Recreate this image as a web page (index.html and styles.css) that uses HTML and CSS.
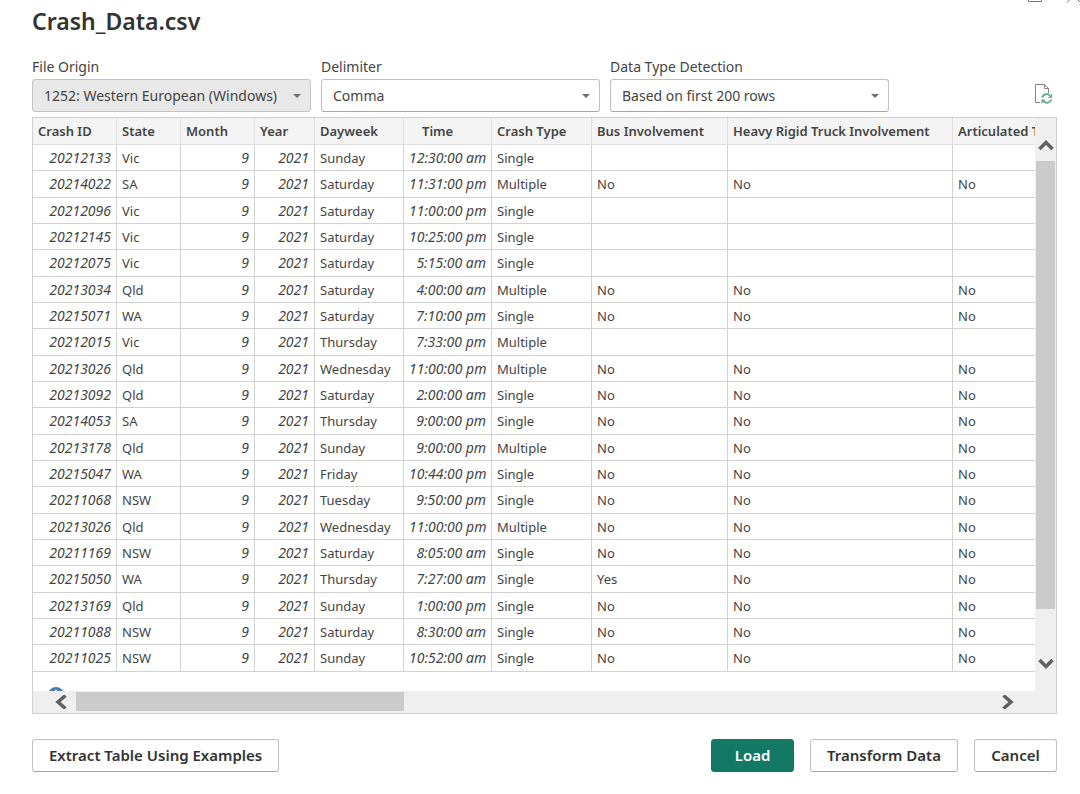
FILE: index.html
```html
<!DOCTYPE html>
<html lang="en">
<head>
<meta charset="utf-8">
<title>Crash_Data.csv</title>
<link rel="stylesheet" href="styles.css">
</head>
<body>
<div class="window-controls" aria-hidden="true">
  <svg width="60" height="4" viewBox="0 0 60 4"><path d="M8.500 0V1.500H21.500V0M47 2.500L50 -0.500M60.500 2.500L57.500 -0.500" fill="none" stroke="#777"/></svg>
</div>
<main class="dialog">
  <h1 class="title">Crash_Data.csv</h1>

  <form class="options">
    <div class="field">
      <label for="origin">File Origin</label>
      <div class="picker picker-disabled">
        <select id="origin" disabled><option>1252: Western European (Windows)</option></select>
      </div>
    </div>
    <div class="field">
      <label for="delimiter">Delimiter</label>
      <div class="picker">
        <select id="delimiter"><option>Comma</option></select>
      </div>
    </div>
    <div class="field">
      <label for="detection">Data Type Detection</label>
      <div class="picker">
        <select id="detection"><option>Based on first 200 rows</option></select>
      </div>
    </div>
    <button type="button" class="refresh" aria-label="Refresh preview">
      <svg width="20" height="20" viewBox="0 0 20 20" fill="none">
        <path d="M7 18.500H2.500V.500H11.500L15.500 4.500V9M11.500 .500V4.500H15.500" stroke="#858585"/>
        <path d="M9.200 13.500A4.600 4.600 0 0 1 17 11.600M18.300 15.400A4.600 4.600 0 0 1 10.600 17.400" stroke="#6bac95" stroke-width="2"/>
        <path d="M19.200 9.500V14H14.700ZM8.400 20V15.500H12.900Z" fill="#6bac95"/>
      </svg>
    </button>
  </form>

  <section class="preview">
    <div class="viewport">
      <table class="grid">
        <colgroup>
          <col class="c-id"><col class="c-state"><col class="c-month"><col class="c-year"><col class="c-day">
          <col class="c-time"><col class="c-type"><col class="c-bus"><col class="c-truck"><col class="c-articulated">
        </colgroup>
        <thead>
          <tr><th>Crash ID</th><th>State</th><th>Month</th><th>Year</th><th>Dayweek</th><th class="time-head">Time</th><th>Crash Type</th><th>Bus Involvement</th><th>Heavy Rigid Truck Involvement</th><th>Articulated Truck Involvement</th></tr>
        </thead>
        <tbody>
          <tr><td class="num">20212133</td><td>Vic</td><td class="num">9</td><td class="num">2021</td><td>Sunday</td><td class="num">12:30:00 am</td><td>Single</td><td></td><td></td><td></td></tr>
          <tr><td class="num">20214022</td><td>SA</td><td class="num">9</td><td class="num">2021</td><td>Saturday</td><td class="num">11:31:00 pm</td><td>Multiple</td><td>No</td><td>No</td><td>No</td></tr>
          <tr><td class="num">20212096</td><td>Vic</td><td class="num">9</td><td class="num">2021</td><td>Saturday</td><td class="num">11:00:00 pm</td><td>Single</td><td></td><td></td><td></td></tr>
          <tr><td class="num">20212145</td><td>Vic</td><td class="num">9</td><td class="num">2021</td><td>Saturday</td><td class="num">10:25:00 pm</td><td>Single</td><td></td><td></td><td></td></tr>
          <tr><td class="num">20212075</td><td>Vic</td><td class="num">9</td><td class="num">2021</td><td>Saturday</td><td class="num">5:15:00 am</td><td>Single</td><td></td><td></td><td></td></tr>
          <tr><td class="num">20213034</td><td>Qld</td><td class="num">9</td><td class="num">2021</td><td>Saturday</td><td class="num">4:00:00 am</td><td>Multiple</td><td>No</td><td>No</td><td>No</td></tr>
          <tr><td class="num">20215071</td><td>WA</td><td class="num">9</td><td class="num">2021</td><td>Saturday</td><td class="num">7:10:00 pm</td><td>Single</td><td>No</td><td>No</td><td>No</td></tr>
          <tr><td class="num">20212015</td><td>Vic</td><td class="num">9</td><td class="num">2021</td><td>Thursday</td><td class="num">7:33:00 pm</td><td>Multiple</td><td></td><td></td><td></td></tr>
          <tr><td class="num">20213026</td><td>Qld</td><td class="num">9</td><td class="num">2021</td><td>Wednesday</td><td class="num">11:00:00 pm</td><td>Multiple</td><td>No</td><td>No</td><td>No</td></tr>
          <tr><td class="num">20213092</td><td>Qld</td><td class="num">9</td><td class="num">2021</td><td>Saturday</td><td class="num">2:00:00 am</td><td>Single</td><td>No</td><td>No</td><td>No</td></tr>
          <tr><td class="num">20214053</td><td>SA</td><td class="num">9</td><td class="num">2021</td><td>Thursday</td><td class="num">9:00:00 pm</td><td>Single</td><td>No</td><td>No</td><td>No</td></tr>
          <tr><td class="num">20213178</td><td>Qld</td><td class="num">9</td><td class="num">2021</td><td>Sunday</td><td class="num">9:00:00 pm</td><td>Multiple</td><td>No</td><td>No</td><td>No</td></tr>
          <tr><td class="num">20215047</td><td>WA</td><td class="num">9</td><td class="num">2021</td><td>Friday</td><td class="num">10:44:00 pm</td><td>Single</td><td>No</td><td>No</td><td>No</td></tr>
          <tr><td class="num">20211068</td><td>NSW</td><td class="num">9</td><td class="num">2021</td><td>Tuesday</td><td class="num">9:50:00 pm</td><td>Single</td><td>No</td><td>No</td><td>No</td></tr>
          <tr><td class="num">20213026</td><td>Qld</td><td class="num">9</td><td class="num">2021</td><td>Wednesday</td><td class="num">11:00:00 pm</td><td>Multiple</td><td>No</td><td>No</td><td>No</td></tr>
          <tr><td class="num">20211169</td><td>NSW</td><td class="num">9</td><td class="num">2021</td><td>Saturday</td><td class="num">8:05:00 am</td><td>Single</td><td>No</td><td>No</td><td>No</td></tr>
          <tr><td class="num">20215050</td><td>WA</td><td class="num">9</td><td class="num">2021</td><td>Thursday</td><td class="num">7:27:00 am</td><td>Single</td><td>Yes</td><td>No</td><td>No</td></tr>
          <tr><td class="num">20213169</td><td>Qld</td><td class="num">9</td><td class="num">2021</td><td>Sunday</td><td class="num">1:00:00 pm</td><td>Single</td><td>No</td><td>No</td><td>No</td></tr>
          <tr><td class="num">20211088</td><td>NSW</td><td class="num">9</td><td class="num">2021</td><td>Saturday</td><td class="num">8:30:00 am</td><td>Single</td><td>No</td><td>No</td><td>No</td></tr>
          <tr><td class="num">20211025</td><td>NSW</td><td class="num">9</td><td class="num">2021</td><td>Sunday</td><td class="num">10:52:00 am</td><td>Single</td><td>No</td><td>No</td><td>No</td></tr>
        </tbody>
      </table>
      <div class="note">
        <svg width="16" height="4" viewBox="0 0 16 4"><circle cx="8" cy="8" r="8" fill="#4a7fb5"/><path d="M7 3H9V4H7Z" fill="#fff"/></svg>
      </div>
    </div>
    <div class="scroll-y">
      <button type="button" class="arrow" aria-label="Scroll up"><svg width="16" height="12" viewBox="0 0 16 12"><path d="M1.500 10L8 3.500L14.500 10" fill="none" stroke="#606060" stroke-width="3.500"/></svg></button>
      <div class="track"><div class="thumb"></div></div>
      <button type="button" class="arrow" aria-label="Scroll down"><svg width="16" height="12" viewBox="0 0 16 12"><path d="M1.500 2L8 8.500L14.500 2" fill="none" stroke="#606060" stroke-width="3.500"/></svg></button>
    </div>
    <div class="scroll-x">
      <button type="button" class="arrow" aria-label="Scroll left"><svg width="12" height="14" viewBox="0 0 12 14"><path d="M10.500 .500L3 7L10.500 13.500" fill="none" stroke="#606060" stroke-width="3.500"/></svg></button>
      <div class="track"><div class="thumb"></div></div>
      <button type="button" class="arrow" aria-label="Scroll right"><svg width="12" height="14" viewBox="0 0 12 14"><path d="M1.500 .500L9 7L1.500 13.500" fill="none" stroke="#606060" stroke-width="3.500"/></svg></button>
    </div>
  </section>

  <footer class="actions">
    <button type="button" class="btn extract">Extract Table Using Examples</button>
    <button type="button" class="btn primary">Load</button>
    <button type="button" class="btn">Transform Data</button>
    <button type="button" class="btn">Cancel</button>
  </footer>
</main>
</body>
</html>
```
FILE: styles.css
```css
* { box-sizing: border-box; }

body {
  margin: 0;
  background: #fff;
  color: #444;
  font: 14px/20px "Noto Sans", "Open Sans", sans-serif;
}

button, select { font: inherit; color: inherit; }

.window-controls {
  display: flex;
  justify-content: flex-end;
  height: 4px;
}

.dialog { padding: 0 23px 20px 32px; }

.title {
  margin: 0;
  padding-top: 1px;
  color: #333;
  font-size: 23px;
  font-weight: 600;
  line-height: 32px;
}

.options {
  display: flex;
  align-items: flex-end;
  gap: 10px;
  margin-top: 20px;
}

.field { flex: 0 1 279px; min-width: 0; }

.field label {
  display: block;
  padding-bottom: 2px;
}

.picker { position: relative; }

.picker::after {
  content: "";
  position: absolute;
  top: 15px;
  right: 10px;
  border: 4px solid transparent;
  border-top-color: #707070;
  border-bottom: 0;
  pointer-events: none;
}

.picker select {
  display: block;
  width: 100%;
  height: 33px;
  padding: 0 24px 0 11px;
  appearance: none;
  background: #fff;
  border: 1px solid #c0c0c0;
  border-bottom-color: #a6a6a6;
  border-radius: 3px;
}

.picker-disabled select {
  background: #e8e8e8;
  border-color: #c3c3c3;
  opacity: 1;
}

.refresh {
  display: flex;
  margin: 0 4px 8px auto;
  padding: 0;
  background: none;
  border: 0;
}

.preview {
  display: grid;
  grid-template-columns: minmax(0, 1fr) 21px;
  margin-top: 5px;
  border: 1px solid #cfcfcf;
  background: #efefef;
}

.viewport {
  overflow: hidden;
  background: #fff;
}

.grid {
  width: 1120px;
  table-layout: fixed;
  border-spacing: 0;
  font-size: 13px;
  line-height: 18px;
}

.c-id { width: 84px; }
.c-state { width: 64px; }
.c-month { width: 74px; }
.c-year { width: 60px; }
.c-day { width: 89px; }
.c-time { width: 88px; }
.c-type { width: 100px; }
.c-bus { width: 136px; }
.c-truck { width: 225px; }
.c-articulated { width: 200px; }

.grid th, .grid td {
  height: 26px;
  padding: 0 5px;
  border: solid #d2d2d2;
  border-width: 0 1px 1px 0;
  text-align: left;
  white-space: nowrap;
}

.grid th {
  height: 27px;
  background: #f4f4f4;
  border-color: #dedede;
  font-weight: 600;
}

.grid tr:nth-child(3n + 2) td { height: 27px; }

.grid .time-head { padding-left: 18px; }

.grid .num {
  font-size: 14px;
  font-style: italic;
  text-align: right;
}

.note {
  display: flex;
  padding: 15px 15px 0;
}

.arrow {
  display: flex;
  align-items: center;
  justify-content: center;
  flex: none;
  padding: 0;
  background: none;
  border: 0;
}

.track { display: flex; flex: 1; }

.thumb { background: #cbcbcb; }

.scroll-y {
  display: flex;
  flex-direction: column;
  padding: 11px 0 12px 1px;
}

.scroll-y .arrow { height: 31px; }
.scroll-y .track { padding: 1px 1px 0 0; }
.scroll-y .thumb { width: 100%; height: 92%; }

.scroll-x {
  display: flex;
  grid-column: 1 / -1;
  height: 22px;
  padding: 1px 33px 2px 13px;
}

.scroll-x .arrow { width: 30px; }
.scroll-x .thumb { width: calc(100% * 5 / 14); }

.actions {
  display: flex;
  gap: 16px;
  margin-top: 25px;
}

.btn {
  min-width: 83px;
  height: 33px;
  padding: 0 16px 2px;
  background: #fff;
  border: 1px solid #c0c0c0;
  border-bottom-color: #a6a6a6;
  border-radius: 3px;
  color: #333;
  font-size: 15px;
  font-weight: 600;
  white-space: nowrap;
}

.extract { margin-right: auto; }

.primary {
  background: #137864;
  border-color: #137864;
  color: #fff;
}
```
